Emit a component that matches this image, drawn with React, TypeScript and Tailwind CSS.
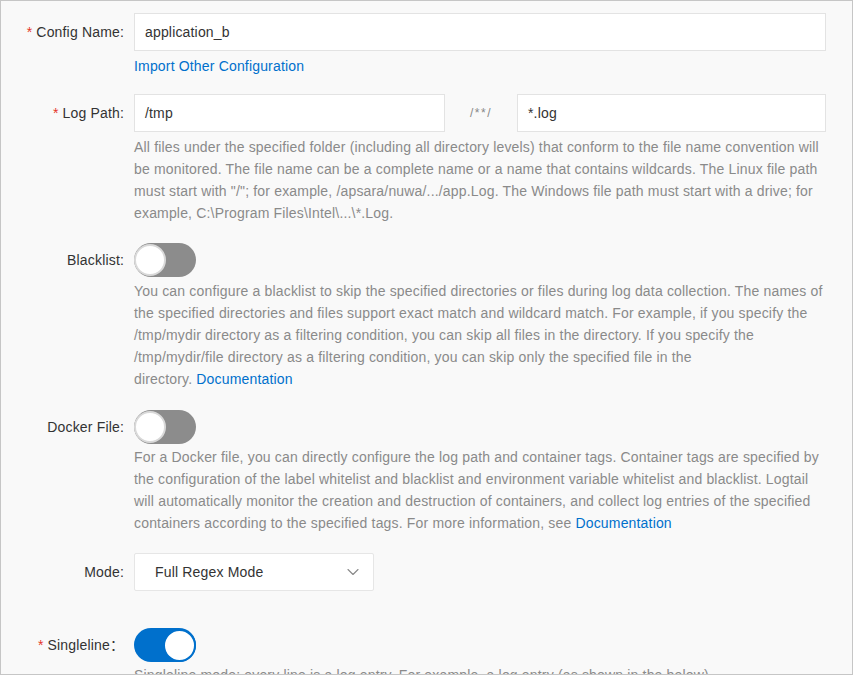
import { ChevronDown } from 'lucide-react';
import type { ReactNode } from 'react';

const Label = ({ text, required, height = 38 }: { text: string; required?: boolean; height?: number }) => (
  <div
    className="w-[123px] shrink-0 flex items-center justify-end text-[14px] text-[#333]"
    style={{ height }}
  >
    {required && <span className="text-[#e5362a] mr-[4px]">*</span>}
    {text}
  </div>
);

const Toggle = ({ on }: { on?: boolean }) => (
  <div
    className={`w-[62px] h-[34px] rounded-full flex items-center ${
      on ? 'bg-[#0070cc] justify-end' : 'bg-[#8c8c8c] justify-start'
    }`}
  >
    <div
      className={`w-[32px] h-[32px] rounded-full bg-white border-[2px] ${
        on ? 'border-[#0070cc] w-[33px] h-[33px]' : 'border-[#d9d9d9]'
      }`}
    />
  </div>
);

const Help = ({ lines, className = '' }: { lines: ReactNode[]; className?: string }) => (
  <div className={`text-[14px] leading-[22px] text-[#8a8a8a] ${className}`}>
    {lines.map((l, i) => (
      <div key={i} className="whitespace-nowrap">
        {l}
      </div>
    ))}
  </div>
);

const Row = ({ children, className = '' }: { children: ReactNode; className?: string }) => (
  <div className={`flex items-start ${className}`}>{children}</div>
);

const Input = ({ value, className = '' }: { value: string; className?: string }) => (
  <div
    className={`h-[38px] bg-white border border-[#e3e3e3] flex items-center px-[10px] text-[14px] text-[#333] ${className}`}
  >
    {value}
  </div>
);

export default function App() {
  return (
    <div
      className="w-[853px] h-[675px] overflow-hidden bg-[#f9f9f9] border border-[#c6c6c6] pt-[12px] tracking-[0.17px]"
      style={{ fontFamily: '"Liberation Sans", Arial, "Noto Sans CJK SC", sans-serif' }}
    >
      {/* Config name */}
      <Row>
        <Label text="Config Name:" required />
        <div className="ml-[10px] w-[692px]">
          <Input value="application_b" />
          <div className="mt-[4px] text-[14px] leading-[22px] text-[#0070cc]">Import Other Configuration</div>
        </div>
      </Row>

      {/* Log path */}
      <Row className="mt-[17px]">
        <Label text="Log Path:" required />
        <div className="ml-[10px] w-[692px]">
          <div className="flex items-center">
            <Input value="/tmp" className="w-[311px]" />
            <div className="w-[72px] text-center text-[12px] text-[#888] tracking-[1.5px]">/**/</div>
            <Input value="*.log" className="flex-1" />
          </div>
          <Help
            className="mt-[4px]"
            lines={[
              'All files under the specified folder (including all directory levels) that conform to the file name convention will',
              'be monitored. The file name can be a complete name or a name that contains wildcards. The Linux file path',
              'must start with "/"; for example, /apsara/nuwa/.../app.Log. The Windows file path must start with a drive; for',
              'example, C:\\Program Files\\Intel\\...\\*.Log.',
            ]}
          />
        </div>
      </Row>

      {/* Blacklist */}
      <Row className="mt-[19px]">
        <Label text="Blacklist:" height={34} />
        <div className="ml-[10px] w-[692px]">
          <Toggle />
          <Help
            className="mt-[3px]"
            lines={[
              'You can configure a blacklist to skip the specified directories or files during log data collection. The names of',
              'the specified directories and files support exact match and wildcard match. For example, if you specify the',
              '/tmp/mydir directory as a filtering condition, you can skip all files in the directory. If you specify the',
              '/tmp/mydir/file directory as a filtering condition, you can skip only the specified file in the',
              <>
                directory. <span className="text-[#0070cc]">Documentation</span>
              </>,
            ]}
          />
        </div>
      </Row>

      {/* Docker file */}
      <Row className="mt-[20px]">
        <Label text="Docker File:" height={34} />
        <div className="ml-[10px] w-[692px]">
          <Toggle />
          <Help
            className="mt-[2px]"
            lines={[
              'For a Docker file, you can directly configure the log path and container tags. Container tags are specified by',
              'the configuration of the label whitelist and blacklist and environment variable whitelist and blacklist. Logtail',
              'will automatically monitor the creation and destruction of containers, and collect log entries of the specified',
              <>
                containers according to the specified tags. For more information, see{' '}
                <span className="text-[#0070cc]">Documentation</span>
              </>,
            ]}
          />
        </div>
      </Row>

      {/* Mode */}
      <Row className="mt-[19px]">
        <Label text="Mode:" />
        <div className="ml-[10px]">
          <div className="w-[240px] h-[38px] bg-white border border-[#e6e6e6] rounded-[2px] flex items-center justify-between pl-[20px] pr-[10px] text-[14px] text-[#333]">
            <span>Full Regex Mode</span>
            <ChevronDown size={20} strokeWidth={1.3} className="text-[#888]" />
          </div>
        </div>
      </Row>

      {/* Singleline */}
      <Row className="mt-[37px]">
        <div className="w-[123px] shrink-0 h-[34px] flex items-center justify-end text-[14px] text-[#333]">
          <span className="text-[#e5362a] mr-[4px]">*</span>
          Singleline
          <span className="w-[14px]">：</span>
        </div>
        <div className="ml-[10px] w-[692px]">
          <Toggle on />
          <Help
            className="mt-[2px]"
            lines={[
              'Singleline mode: every line is a log entry. For example, a log entry (as shown in the below) ...',
            ]}
          />
        </div>
      </Row>
    </div>
  );
}
